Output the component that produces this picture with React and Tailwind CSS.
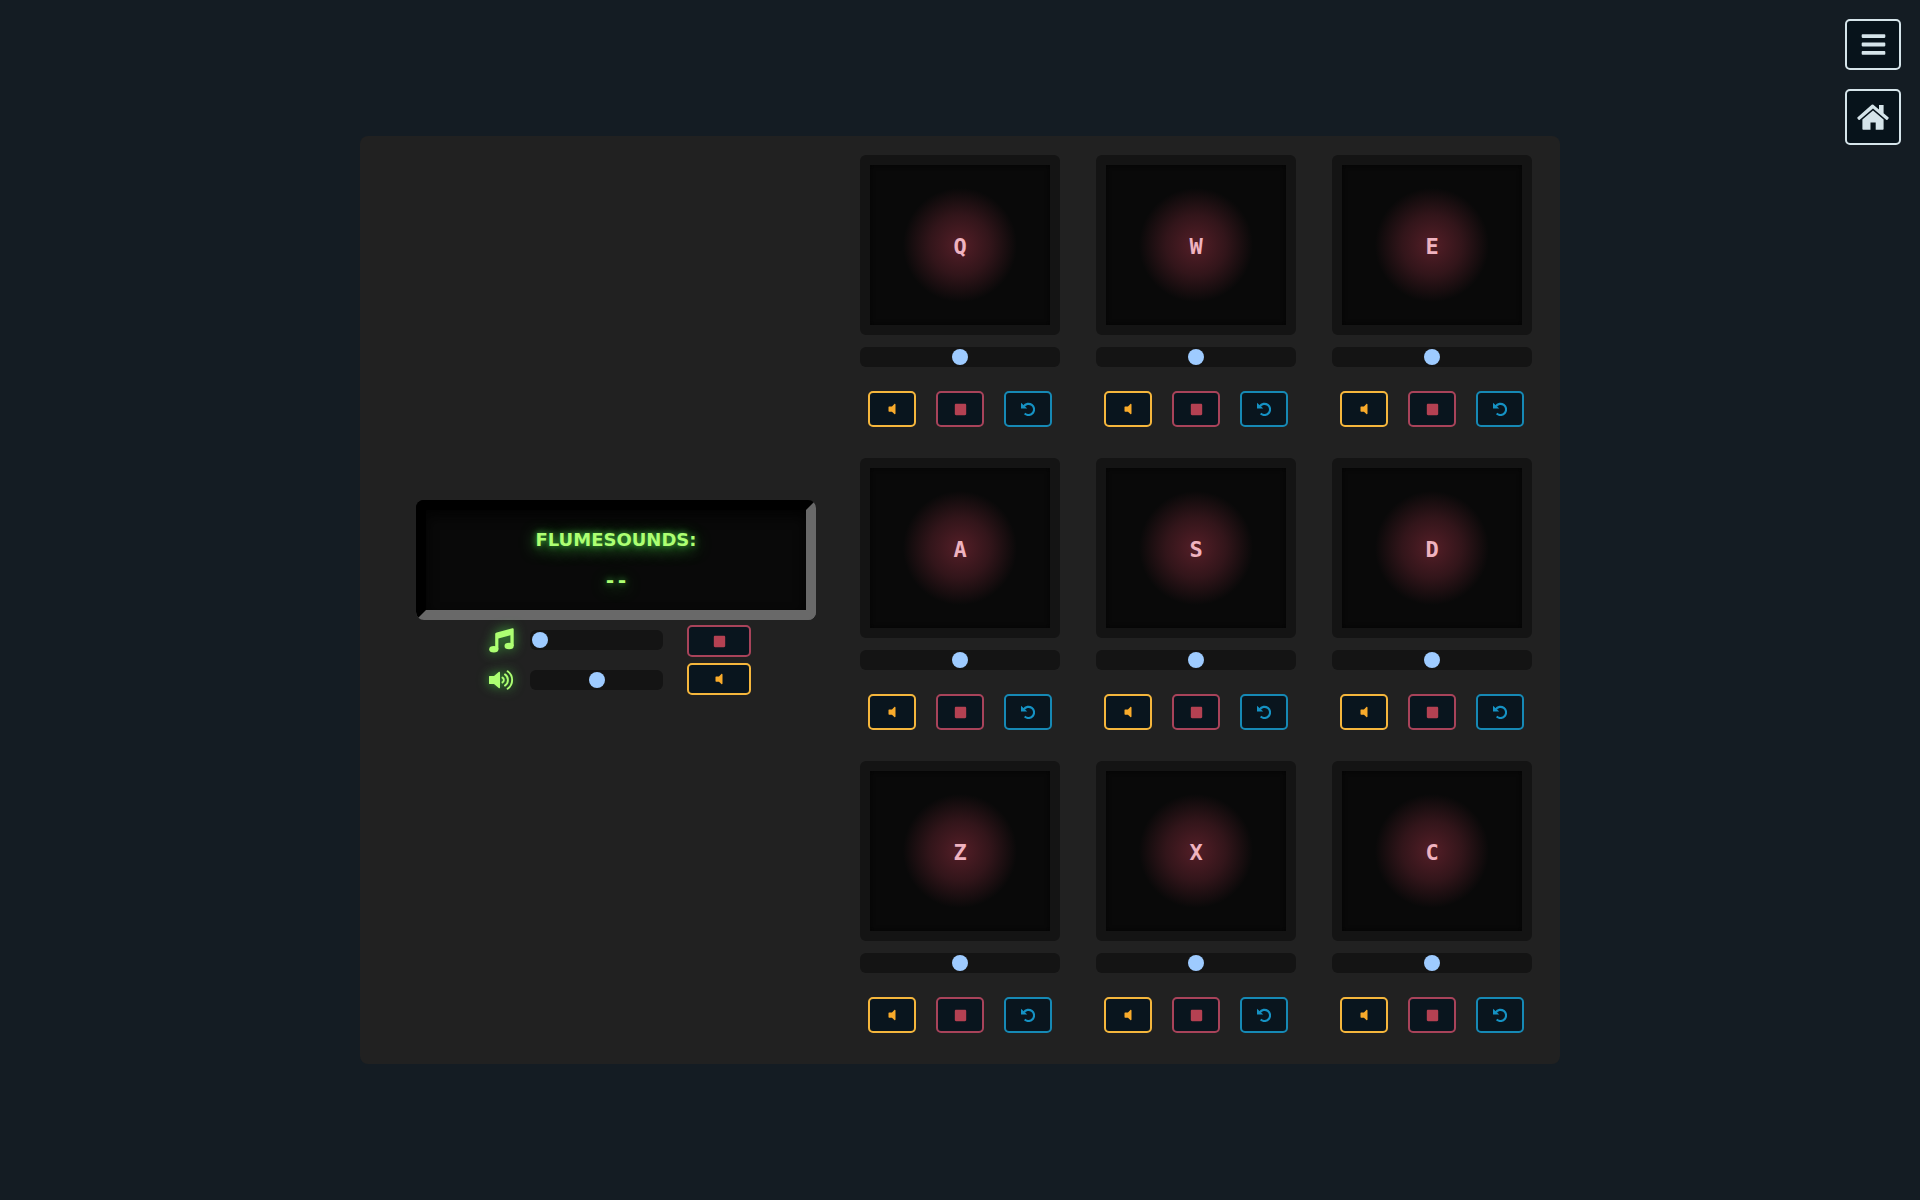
import { useState } from "react";
import { FaBars, FaStop, FaVolumeOff } from "react-icons/fa";

const PADS = ["Q", "W", "E", "A", "S", "D", "Z", "X", "C"];

const TONES = {
  yellow: "border-[#f5b63c] text-[#f9ab2b]",
  red: "border-[#a8435a] text-[#b44152]",
  blue: "border-[#1689b5] text-[#1592c4]",
};

function HomeIcon() {
  return (
    <svg width="32" height="26" viewBox="0 0 32 26" fill="currentColor" aria-hidden="true">
      <path d="M16 .4 22 5.4V1h4.6v8.3l4.8 4a1 1 0 0 1 .1 1.3l-1 1.1a1 1 0 0 1-1.3.1L16 4.6 2.8 15.8a1 1 0 0 1-1.3-.1l-1-1.1a1 1 0 0 1 .1-1.3L14.7.8a2 2 0 0 1 1.3-.4Z" />
      <path d="M16 6.6 26.6 15.4V25a.8.8 0 0 1-.8.8H18.7V18.5h-5.2v7.3H6.2a.8.8 0 0 1-.8-.8V15.4Z" />
    </svg>
  );
}

function MusicIcon() {
  return (
    <svg width="25" height="25" viewBox="0 0 25 25" fill="currentColor" className="drop-shadow-[0_0_6px_#3fae3c]" aria-hidden="true">
      <path d="M6.2 6.3C6.2 5.2 7 4.8 7.8 4.5L23.4.3c.8-.2 1.3.2 1.3 1V18H21.4V7.2L9.4 10.4V21H6.2Z" />
      <ellipse cx="4.8" cy="21.3" rx="4.6" ry="3.2" />
      <ellipse cx="20.1" cy="18" rx="4.6" ry="3.2" />
    </svg>
  );
}

function VolumeIcon() {
  return (
    <svg width="25" height="20" viewBox="0 0 25 20" fill="none" stroke="currentColor" strokeWidth="1.9" strokeLinecap="round" className="drop-shadow-[0_0_6px_#3fae3c]" aria-hidden="true">
      <path d="M0 6.5Q0 6 .5 6H5L10 1.8Q11 1.3 11 2.4V17.6Q11 18.7 10 18.2L5 14H.5Q0 14 0 13.5Z" fill="currentColor" stroke="none" />
      <path d="M13.5 7.6a2.8 2.8 0 0 1 0 4.8M16 4.4a6.8 6.8 0 0 1 0 11.2M18.6 1.2a10.8 10.8 0 0 1 0 17.6" />
    </svg>
  );
}

function LoopIcon() {
  return (
    <svg width="14" height="14" viewBox="0 0 13 13" fill="none" stroke="currentColor" strokeWidth="2" aria-hidden="true">
      <path d="M2.6 4A5.2 5.2 0 1 1 3.4 10.7" />
      <path d="M0 .6V6H5.8Z" fill="currentColor" stroke="none" />
    </svg>
  );
}

function Range({ label, initial, className }) {
  const [value, setValue] = useState(initial);
  return (
    <input
      type="range"
      aria-label={label}
      min="0"
      max="100"
      value={value}
      onChange={(e) => setValue(Number(e.target.value))}
      className={
        "block h-5 cursor-pointer appearance-none rounded-md bg-[#141414] px-0.5 [&::-webkit-slider-thumb]:size-4 [&::-webkit-slider-thumb]:appearance-none [&::-webkit-slider-thumb]:rounded-full [&::-webkit-slider-thumb]:bg-[#9ecbff] " +
        className
      }
    />
  );
}

function IconButton({ label, tone, className, children }) {
  return (
    <button
      type="button"
      aria-label={label}
      className={
        "flex items-center justify-center rounded-[5px] border-2 bg-[#09151e] " + TONES[tone] + " " + className
      }
    >
      {children}
    </button>
  );
}

function Pad({ letter }) {
  return (
    <div className="flex flex-col items-center">
      <button
        type="button"
        className="flex h-[180px] w-full items-center justify-center rounded-md border-10 border-[#141414] bg-[#090909] bg-[radial-gradient(circle,#541e27_0px,#32151a_30px,#090909_57px)] pt-1 font-['DejaVu_Sans_Mono',monospace] text-[22px] leading-6 font-bold text-[#efb3c0] shadow-[inset_0_0_5px_#040404]"
      >
        {letter}
      </button>
      <Range label={`Volume ${letter}`} initial={50} className="mt-3 w-full" />
      <div className="mt-6 flex gap-5">
        <IconButton label={`Mute ${letter}`} tone="yellow" className="h-9 w-12">
          <FaVolumeOff size={14} />
        </IconButton>
        <IconButton label={`Stop ${letter}`} tone="red" className="h-9 w-12">
          <FaStop size={13} />
        </IconButton>
        <IconButton label={`Loop ${letter}`} tone="blue" className="h-9 w-12">
          <LoopIcon />
        </IconButton>
      </div>
    </div>
  );
}

function Display() {
  return (
    <section className="w-[400px] pt-3">
      <div className="flex h-[120px] flex-col items-center justify-center gap-4 rounded-lg border-10 border-t-black border-r-[#696969] border-b-[#696969] border-l-black bg-[#090909] text-[#adff72] shadow-[inset_0_6px_12px_#030303] [text-shadow:0_0_6px_#3fae3c,0_3px_16px_#3fae3c]">
        <h1 className="font-['DejaVu_Sans',sans-serif] text-lg leading-6 font-bold">FLUMESOUNDS:</h1>
        <p className="font-['DejaVu_Sans_Mono',monospace] text-xl leading-6 font-bold">--</p>
      </div>
      <div className="flex justify-center gap-6 pl-2">
        <div className="text-[#adff72]">
          <div className="flex h-10 items-center gap-4">
            <MusicIcon />
            <Range label="Music volume" initial={0} className="w-[133px]" />
          </div>
          <div className="flex h-10 items-center gap-4">
            <VolumeIcon />
            <Range label="Master volume" initial={50} className="w-[133px]" />
          </div>
        </div>
        <div className="flex flex-col gap-1.5 pt-[5px]">
          <IconButton label="Stop music" tone="red" className="h-8 w-16">
            <FaStop size={13} />
          </IconButton>
          <IconButton label="Mute all" tone="yellow" className="h-8 w-16">
            <FaVolumeOff size={14} />
          </IconButton>
        </div>
      </div>
    </section>
  );
}

export default function App() {
  return (
    <div className="flex min-h-screen items-center justify-center bg-[#141c23]">
      <main className="flex w-full max-w-[1200px] items-center justify-between rounded-lg bg-[#212121] pt-[19px] pr-7 pb-[31px] pl-14">
        <Display />
        <div className="grid grid-cols-[repeat(3,200px)] gap-x-9 gap-y-[31px]">
          {PADS.map((letter) => (
            <Pad key={letter} letter={letter} />
          ))}
        </div>
      </main>
      <nav className="fixed top-[19px] right-[19px] flex flex-col gap-[19px] text-[#d5e4ea]">
        <button
          type="button"
          aria-label="Menu"
          className="flex h-[51px] w-14 items-center justify-center rounded-[5px] border-2 border-[#d5e4ea] bg-[#07131b]"
        >
          <FaBars size={27} />
        </button>
        <a
          href="#home"
          aria-label="Home"
          className="flex size-14 items-center justify-center rounded-[5px] border-2 border-[#d5e4ea] bg-[#07131b]"
        >
          <HomeIcon />
        </a>
      </nav>
    </div>
  );
}
